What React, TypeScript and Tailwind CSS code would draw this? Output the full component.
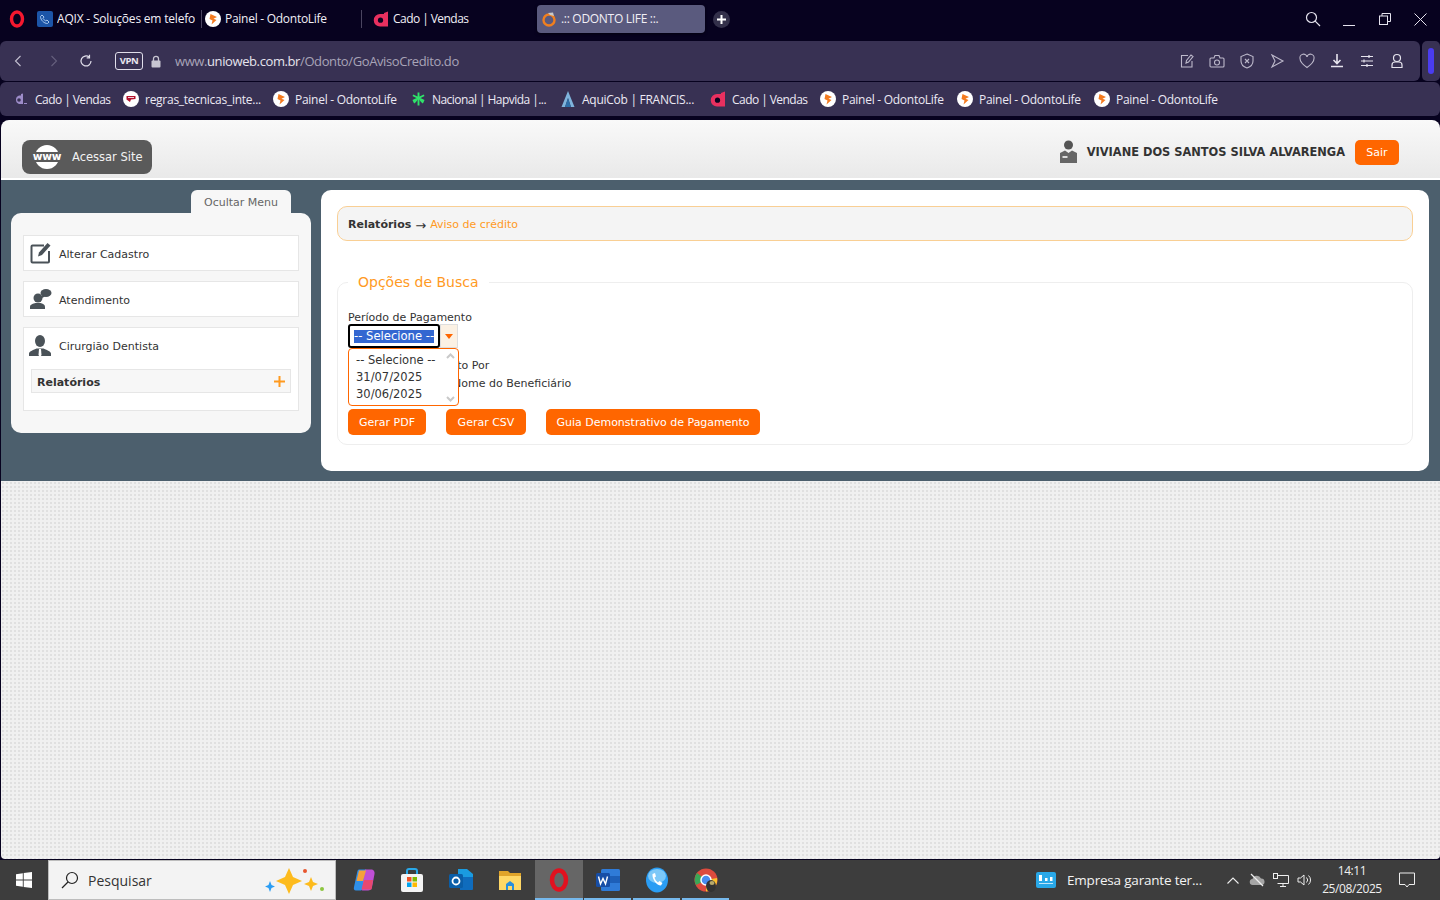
import React from 'react';

const PainelIcon = () => (
  <svg width="16" height="16" viewBox="0 0 16 16" className="shrink-0">
    <circle cx="8" cy="8" r="8" fill="#fff" />
    <path d="M5.5 3 L12 6 L8.5 7.8 L11.5 9 L6.5 13.5 L7.5 9.5 L4.5 8 Z" fill="#f47b20" />
  </svg>
);

const CadoIcon = () => (
  <svg width="16" height="16" viewBox="0 0 16 16" className="shrink-0">
    <path d="M11 2 L15 0.5 V15.5 H7 A6.2 6.2 0 0 1 7 3 H11 Z" fill="#e8305f" />
    <circle cx="7.5" cy="9.2" r="2.6" fill="#0a0420" />
  </svg>
);

const CadoPurple = () => (
  <svg width="16" height="16" viewBox="0 0 16 16" className="shrink-0">
    <path d="M8 3 L10 2.5 V13 H6 A4.5 4.5 0 0 1 6 4.5 H8 Z" fill="#9d8cc9" />
    <circle cx="6" cy="9" r="1.8" fill="#383153" />
    <rect x="11" y="12" width="3" height="1" fill="#9d8cc9" />
  </svg>
);

const RegrasIcon = () => (
  <svg width="16" height="16" viewBox="0 0 16 16" className="shrink-0">
    <circle cx="8" cy="8" r="8" fill="#fff" />
    <path d="M3.5 5 H12.5 V8 L8 8.5 L7 11 L3.5 8.5 Z" fill="#b3122e" />
    <path d="M5 6.2 H11 V7 H5 Z" fill="#fff" />
  </svg>
);

const NacionalIcon = () => (
  <svg width="15" height="16" viewBox="0 0 16 16" className="shrink-0" stroke="#2fe36a" strokeWidth="2">
    <path d="M8 1 V15 M2 4 L14 10 M14 4 L2 10 M3 12 L6 9 M13 12 L10 9" />
  </svg>
);

const AquiCobIcon = () => (
  <svg width="16" height="18" viewBox="0 0 16 18" className="shrink-0">
    <path d="M8 1 L14.5 17 H11 L8 8 L5 17 H1.5 Z" fill="#7fb4dc" />
    <path d="M8 8 L11 17 H5 Z" fill="#2d6ea8" />
  </svg>
);

const Bookmark = ({ icon, label, width, tight }: { icon: React.ReactNode; label: string; width: string; tight?: boolean }) => (
  <div className={`flex items-center gap-[6px] shrink-0 ${width}`}>
    {icon}
    <span className={`pt-[2px] text-[12px] text-[#ece9f3] whitespace-nowrap ${tight ? 'tracking-[-0.55px]' : 'tracking-[-0.27px]'}`}>{label}</span>
  </div>
);

const stroke = { fill: 'none', stroke: '#bdb9cb', strokeWidth: 1.1 };

const BrowserChrome = () => (
  <div className="bg-[#07021f] h-[120px] font-['Open_Sans',sans-serif]">
    {/* tab strip */}
    <div className="h-[41px] pb-[3px] flex items-center relative">
      <svg width="16" height="18" viewBox="0 0 16 18" className="ml-[9px] mr-[12px] shrink-0">
        <ellipse cx="8" cy="9" rx="5.5" ry="7" fill="none" stroke="#f5182f" strokeWidth="3.4" />
      </svg>
      <div className="w-[164px] flex items-center gap-[4px] shrink-0 overflow-hidden">
        <div className="w-[16px] h-[16px] bg-[#1c55a8] rounded-[2px] shrink-0 flex items-center justify-center">
          <svg width="12" height="12" viewBox="0 0 12 12" fill="none" stroke="#a9c8ee" strokeWidth="1">
            <path d="M3 2 L5 4 L4 5.5 L6.5 8 L8 7 L10 9 L8.5 10.5 C5 10.5 1.5 7 1.5 3.5 Z" />
          </svg>
        </div>
        <span className="text-[12px] tracking-[-0.2px] text-[#f1eff6] whitespace-nowrap w-[138px] overflow-hidden">AQIX - Soluções em telefo</span>
      </div>
      <div className="w-px h-[18px] bg-[#4a4560] shrink-0" />
      <div className="w-[159px] pl-[3px] flex items-center gap-[4px] shrink-0">
        <PainelIcon />
        <span className="text-[12px] tracking-[-0.27px] text-[#f1eff6] whitespace-nowrap">Painel - OdontoLife</span>
      </div>
      <div className="w-px h-[18px] bg-[#4a4560] shrink-0" />
      <div className="w-[175px] pl-[11px] flex items-center gap-[4px] shrink-0">
        <CadoIcon />
        <span className="text-[12px] tracking-[-0.55px] text-[#f1eff6] whitespace-nowrap">Cado | Vendas</span>
      </div>
      <div className="w-[168px] h-[28px] rounded-[4px] bg-[#5a5a7e] flex items-center pl-[4px] gap-[4px] shrink-0 shadow-[0_1px_3px_rgba(0,0,0,0.5)]">
        <svg width="16" height="16" viewBox="0 0 16 16">
          <circle cx="8" cy="9" r="5.5" fill="none" stroke="#f07f1f" strokeWidth="2.4" />
          <path d="M7 2 L12 1.5 L13 5 L9 4 Z" fill="#c9c9c9" />
        </svg>
        <span className="text-[12px] tracking-[-0.3px] text-[#f1eff6] whitespace-nowrap">.:: ODONTO LIFE ::.</span>
      </div>
      <div className="ml-[8px] w-[17px] h-[17px] rounded-full bg-[#33304a] flex items-center justify-center shrink-0">
        <svg width="9" height="9" viewBox="0 0 9 9" stroke="#fff" strokeWidth="2"><path d="M4.5 0 V9 M0 4.5 H9" /></svg>
      </div>
      <div className="flex-1" />
      {/* window controls */}
      <svg width="16" height="16" viewBox="0 0 16 16" fill="none" stroke="#e5e3ee" strokeWidth="1.2" className="mr-[22px]">
        <circle cx="6.5" cy="6.5" r="5" /><path d="M10.2 10.2 L15 15" />
      </svg>
      <div className="w-[12px] h-px bg-[#e5e3ee] mt-[12px] mr-[24px]" />
      <svg width="12" height="12" viewBox="0 0 12 12" fill="none" stroke="#e5e3ee" strokeWidth="1" className="mr-[23px]">
        <rect x="0.5" y="3" width="8" height="8.5" /><path d="M3 3 V0.5 H11.5 V8.5 H8.5" />
      </svg>
      <svg width="13" height="13" viewBox="0 0 13 13" fill="none" stroke="#e5e3ee" strokeWidth="1" className="mr-[13px]">
        <path d="M0.5 0.5 L12.5 12.5 M12.5 0.5 L0.5 12.5" />
      </svg>
    </div>
    {/* address bar */}
    <div className="h-[40px] flex gap-[2px]">
      <div className="flex-1 flex items-center bg-[#383153] rounded-[6px]">
        <svg width="8" height="12" viewBox="0 0 8 12" fill="none" stroke="#c3c0d0" strokeWidth="1.1" className="ml-[14px]"><path d="M6.5 1 L1.5 6 L6.5 11" /></svg>
        <svg width="8" height="12" viewBox="0 0 8 12" fill="none" stroke="#65607d" strokeWidth="1.1" className="ml-[28px]"><path d="M1.5 1 L6.5 6 L1.5 11" /></svg>
        <svg width="14" height="14" viewBox="0 0 14 14" fill="none" stroke="#e0deea" strokeWidth="1.2" className="ml-[21px]">
          <path d="M12 7 A5 5 0 1 1 10.3 3.2" /><path d="M10.5 0.8 V3.8 H7.7" />
        </svg>
        <div className="ml-[22px] w-[28px] h-[18px] border border-[#e0deea] rounded-[3px] flex items-center justify-center text-[9.5px] font-bold tracking-[-0.4px] text-[#e8e6f0]">VPN</div>
        <svg width="10" height="13" viewBox="0 0 10 13" className="ml-[8px]">
          <path d="M2.5 6 V3.8 A2.5 2.5 0 0 1 7.5 3.8 V6" fill="none" stroke="#c8c6d2" strokeWidth="1.3" />
          <rect x="0.5" y="5.5" width="9" height="7" rx="1" fill="#c8c6d2" />
        </svg>
        <div className="ml-[14px] pt-[2px] text-[13px] tracking-[-0.4px] text-[#a8a4b8] whitespace-nowrap">
          www.<span className="text-[#e6e4ee]">unioweb.com.br</span>/Odonto/GoAvisoCredito.do
        </div>
        <div className="flex-1" />
        <div className="flex items-center gap-[14px] mr-[15px]">
          <svg width="16" height="16" viewBox="0 0 16 16" {...stroke}><path d="M9 2.5 H2.5 V14 H13 V8" /><path d="M7 10 L7.5 7.5 L12 2 L14 3.5 L9.5 9 Z" /></svg>
          <svg width="16" height="16" viewBox="0 0 16 16" {...stroke}><path d="M2 5 H5 L6 2.5 H10 L11 5 H14 A1 1 0 0 1 15 6 V13 A1 1 0 0 1 14 14 H2 A1 1 0 0 1 1 13 V6 A1 1 0 0 1 2 5 Z" /><circle cx="8" cy="9.5" r="2.5" /></svg>
          <svg width="16" height="16" viewBox="0 0 16 16" {...stroke}><path d="M8 1 L14 3.5 V8 C14 11.5 11 14 8 15 C5 14 2 11.5 2 8 V3.5 Z" /><path d="M6 6 L10 10 M10 6 L6 10" /></svg>
          <svg width="16" height="16" viewBox="0 0 16 16" {...stroke}><path d="M3 2 L14 8 L3 14 L6 8 Z" /></svg>
          <svg width="16" height="16" viewBox="0 0 16 16" {...stroke}><path d="M8 14.5 C3 11 1 8.5 1 5.5 A3.5 3.5 0 0 1 8 4 A3.5 3.5 0 0 1 15 5.5 C15 8.5 13 11 8 14.5 Z" /></svg>
          <svg width="16" height="16" viewBox="0 0 16 16" fill="none" stroke="#e6e4ee" strokeWidth="1.3"><path d="M8 1 V10 M4.5 7 L8 10.5 L11.5 7 M2 13.5 H14" strokeWidth="1.6" /></svg>
          <svg width="16" height="16" viewBox="0 0 16 16" fill="none" stroke="#e6e4ee" strokeWidth="1.2"><path d="M2 3.5 H14 M2 8 H14 M2 12.5 H14 M10 2 V5 M5 6.5 V9.5 M8 11 V14" /></svg>
          <svg width="16" height="16" viewBox="0 0 16 16" fill="none" stroke="#e6e4ee" strokeWidth="1.2"><circle cx="8" cy="5" r="3.5" /><path d="M3 14.5 V12 A3 3 0 0 1 6 9 H10 A3 3 0 0 1 13 12 V14.5 Z" /></svg>
        </div>
      </div>
      <div className="w-[18px] bg-[#383153] rounded-[5px] flex items-center justify-center">
        <div className="w-[6px] h-[26px] bg-[#4a3cf0] rounded-[3px]" />
      </div>
    </div>
    {/* bookmarks */}
    <div className="h-[34px] mt-[1px] bg-[#383153] rounded-[6px] flex items-center pl-[13px]">
      <Bookmark icon={<CadoPurple />} label="Cado | Vendas" width="w-[110px]" tight />
      <Bookmark icon={<RegrasIcon />} label="regras_tecnicas_inte..." width="w-[150px]" />
      <Bookmark icon={<PainelIcon />} label="Painel - OdontoLife" width="w-[138px]" />
      <Bookmark icon={<NacionalIcon />} label="Nacional | Hapvida |..." width="w-[149px]" tight />
      <Bookmark icon={<AquiCobIcon />} label="AquiCob | FRANCIS..." width="w-[150px]" />
      <Bookmark icon={<CadoIcon />} label="Cado | Vendas" width="w-[110px]" tight />
      <Bookmark icon={<PainelIcon />} label="Painel - OdontoLife" width="w-[137px]" />
      <Bookmark icon={<PainelIcon />} label="Painel - OdontoLife" width="w-[137px]" />
      <Bookmark icon={<PainelIcon />} label="Painel - OdontoLife" width="w-[137px]" />
    </div>
  </div>
);

const MenuItem = ({ icon, label }: { icon: React.ReactNode; label: string }) => (
  <div className="h-[36px] bg-white border border-[#e6e6e6] flex items-center">
    <div className="w-[35px] flex justify-center">{icon}</div>
    <span className="pt-[4px] text-[11px] text-[#333]">{label}</span>
  </div>
);

const Sidebar = () => (
  <div className="w-[300px] shrink-0 ml-[10px] flex flex-col items-end">
    <div className="w-[100px] h-[23px] mr-[20px] pt-[4px] bg-[#f7f7f7] rounded-t-[6px] flex items-center justify-center text-[11px] text-[#666]">
      Ocultar Menu
    </div>
    <div className="w-full h-[220px] bg-[#f7f7f7] rounded-[10px] px-[12px] pt-[22px] flex flex-col gap-[10px]">
      <MenuItem
        label="Alterar Cadastro"
        icon={
          <svg width="22" height="22" viewBox="0 0 22 22" fill="none" className="-ml-[2px]">
            <path d="M14 3.5 H2.5 A1 1 0 0 0 1.5 4.5 V19.5 A1 1 0 0 0 2.5 20.5 H18 A1 1 0 0 0 19 19.5 V9" stroke="#4a5258" strokeWidth="2" />
            <path d="M8 14.5 L9 10.5 L17.5 1 L20.5 3.5 L12 13 Z" fill="#4a5258" />
          </svg>
        }
      />
      <MenuItem
        label="Atendimento"
        icon={
          <svg width="22" height="22" viewBox="0 0 22 22" fill="#4a5258" className="-ml-[2px]">
            <circle cx="8" cy="10" r="4.5" />
            <path d="M0 21 V18.5 C0 16.5 3.5 15.5 5.5 15 H10.5 C12.5 15.5 15 16.5 15 18.5 V21 Z" />
            <ellipse cx="16" cy="5" rx="5.5" ry="4" />
            <path d="M12 7 L11 10.5 L15 8.5 Z" />
          </svg>
        }
      />
      <div className="h-[84px] bg-white border border-[#e6e6e6] px-[7px]">
        <div className="h-[36px] flex items-center -mx-[7px]">
          <div className="w-[35px] flex justify-center">
            <svg width="24" height="24" viewBox="0 0 24 24" fill="#4a5258" className="-ml-[3px]">
              <ellipse cx="12" cy="7" rx="5" ry="6" />
              <path d="M1 22 V19.5 C1 17 6 16 8.5 14.5 H15.5 C18 16 23 17 23 19.5 V22 Z" />
              <path d="M11 15 H13 L13.5 21 L12 23.5 L10.5 21 Z" fill="#fff" />
            </svg>
          </div>
          <span className="pt-[2px] text-[11px] text-[#333]">Cirurgião Dentista</span>
        </div>
        <div className="mt-[5px] h-[24px] bg-[#f7f7f7] border border-[#e6e6e6] flex items-center justify-between pl-[5px] pr-[5px]">
          <span className="pt-[4px] text-[11px] font-bold text-[#333]">Relatórios</span>
          <svg width="11" height="11" viewBox="0 0 11 11" stroke="#ff9a1f" strokeWidth="2"><path d="M5.5 0 V11 M0 5.5 H11" /></svg>
        </div>
      </div>
    </div>
  </div>
);

const ResultPanel = () => (
  <div className="flex-1 h-[281px] ml-[10px] mr-[11px] bg-white rounded-[10px] p-[16px]">
    <div className="h-[35px] pt-[4px] bg-[#f4f4f4] border border-[#f9cf94] rounded-[10px] flex items-center pl-[10px] text-[11px]">
      <span className="font-bold text-[#333]">Relatórios</span>
      <span className="mx-[4px] text-[13px] leading-[13px] text-[#333]">→</span>
      <span className="text-[#ff9a1f]">Aviso de crédito</span>
    </div>
    <fieldset className="relative mt-[31px] h-[173px] border border-[#eeeeee] rounded-[10px] pl-[10px] pt-[19px]">
      <legend className="px-[10px] text-[14px] leading-[20px] text-[#ff9a1f]">Opções de Busca</legend>
      <div className="text-[11px] leading-[13px] text-[#333]">Período de Pagamento</div>
      <div className="flex">
        <div className="w-[92px] h-[24px] border-2 border-black rounded-[3px] bg-white flex items-center pl-[4px]">
          <span className="bg-[#3367d1] text-white text-[11.6px] leading-[13px] whitespace-nowrap">-- Selecione --</span>
        </div>
        <div className="w-[18px] h-[24px] bg-[#fbf1e4] border border-[#dedede] flex items-center justify-center">
          <svg width="8" height="5" viewBox="0 0 8 5" fill="#ff6600"><path d="M0 0 H8 L4 5 Z" /></svg>
        </div>
      </div>
      {/* rows covered by the open list */}
      <div className="mt-[9px] pl-[45px] text-[11px] leading-[18px] text-[#333] whitespace-nowrap">Agrupamento Por</div>
      <div className="pl-[105px] text-[11px] leading-[18px] text-[#333] whitespace-nowrap">Nome do Beneficiário</div>
      <div className="mt-[16px] flex gap-[20px]">
        <button className="w-[78px] h-[26px] pt-[2px] bg-[#ff6600] rounded-[5px] text-white text-[11px]">Gerar PDF</button>
        <button className="w-[80px] h-[26px] pt-[2px] bg-[#ff6600] rounded-[5px] text-white text-[11px]">Gerar CSV</button>
        <button className="w-[214px] h-[26px] pt-[2px] bg-[#ff6600] rounded-[5px] text-white text-[11px]">Guia Demonstrativo de Pagamento</button>
      </div>
      <div className="absolute left-[10px] top-[56px] w-[111px] h-[58px] bg-white border border-[#ff6600] rounded-[4px] pl-[6px] pt-[3px] text-[11.5px] leading-[17px] text-[#333]">
        <div className="pl-px">-- Selecione --</div>
        <div className="pl-px">31/07/2025</div>
        <div className="pl-px">30/06/2025</div>
        <svg width="9" height="6" viewBox="0 0 9 6" fill="none" stroke="#c9c9c9" strokeWidth="2" className="absolute right-[3px] top-[4px]"><path d="M1 5 L4.5 1.5 L8 5" /></svg>
        <svg width="9" height="6" viewBox="0 0 9 6" fill="none" stroke="#c9c9c9" strokeWidth="2" className="absolute right-[3px] bottom-[3px]"><path d="M1 1 L4.5 4.5 L8 1" /></svg>
      </div>
    </fieldset>
  </div>
);

const Taskbar = () => {
  const underline = 'absolute bottom-0 left-[1px] right-[1px] h-[2px] bg-[#76b9ed]';
  return (
    <div className="h-[40px] bg-[#3d3d3d] flex items-center font-['Open_Sans',sans-serif] text-white">
      <div className="w-[48px] flex justify-center">
        <svg width="16" height="16" viewBox="0 0 16 16" fill="#fff">
          <path d="M0 2.2 L6.8 1.2 V7.5 H0 Z M7.7 1.1 L16 0 V7.5 H7.7 Z M0 8.5 H6.8 V14.8 L0 13.8 Z M7.7 8.5 H16 V16 L7.7 14.9 Z" />
        </svg>
      </div>
      <div className="w-[288px] h-[40px] bg-[#f3f3f3] border border-[#bdbdbd] flex items-center pl-[12px] relative">
        <svg width="18" height="18" viewBox="0 0 18 18" fill="none" stroke="#222" strokeWidth="1.2">
          <circle cx="11" cy="7" r="5.5" /><path d="M7 11 L1 17" />
        </svg>
        <span className="ml-[9px] text-[14px] text-[#333]">Pesquisar</span>
        <svg width="64" height="28" viewBox="0 0 64 28" className="absolute left-[216px] top-[6px]">
          <path d="M24 1 L28 10 L37 14 L28 18 L24 27 L20 18 L11 14 L20 10 Z" fill="#fdbb1d" />
          <path d="M5 14 L6.5 18 L10 19.5 L6.5 21 L5 25 L3.5 21 L0 19.5 L3.5 18 Z" fill="#2a9df4" />
          <path d="M46 10 L48 15 L53 17 L48 19 L46 24 L44 19 L39 17 L44 15 Z" fill="#fdbb1d" />
          <circle cx="40" cy="4" r="2" fill="#e8562e" />
          <circle cx="57" cy="22" r="2" fill="#8cc63f" />
        </svg>
      </div>
      <div className="w-[199px] flex items-center justify-center pl-[2px] gap-[24px]">
        <svg width="24" height="24" viewBox="0 0 24 24">
          <path d="M7 1.5 H13 C15 1.5 15.5 3 15 5 L11 20 C10.5 22 9.5 22.5 8 22.5 H4 C2 22.5 1.5 21 2 19 L5 5 C5.5 2.5 6 1.5 7 1.5 Z" fill="#2f8fe8" />
          <path d="M13 1.5 H19 C21.5 1.5 23 3.5 22.5 6 L20 19 C19.5 21.5 18 22.5 16 22.5 H10 Z" fill="#c04fd6" />
          <path d="M7 2.5 H14 L11 13 H4.5 Z" fill="#f5a13c" />
          <path d="M12 12 H21 L19.5 21.5 H9.5 Z" fill="#e8486f" />
        </svg>
        <svg width="24" height="26" viewBox="0 0 24 26">
          <path d="M7 7 V4 A2 2 0 0 1 9 2 H15 A2 2 0 0 1 17 4 V7" fill="none" stroke="#29a8e8" strokeWidth="2" />
          <rect x="1" y="7" width="22" height="18" rx="2" fill="#f4f4f4" />
          <rect x="7" y="10" width="4.5" height="4.5" fill="#f25022" />
          <rect x="12.5" y="10" width="4.5" height="4.5" fill="#7fba00" />
          <rect x="7" y="15.5" width="4.5" height="4.5" fill="#00a4ef" />
          <rect x="12.5" y="15.5" width="4.5" height="4.5" fill="#ffb900" />
        </svg>
        <svg width="26" height="24" viewBox="0 0 26 24">
          <path d="M10 1 H19 L25 6 V20 L10 20 Z" fill="#1a9be0" />
          <path d="M12 9 H25 V21 A1 1 0 0 1 24 22 H12 Z" fill="#0f6cbd" />
          <rect x="1" y="6" width="14" height="14" rx="1.5" fill="#0a5ea8" />
          <circle cx="8" cy="13" r="3.5" fill="none" stroke="#fff" strokeWidth="1.8" />
        </svg>
        <svg width="24" height="22" viewBox="0 0 24 22">
          <path d="M1 2 H10 L12 4 H23 V9 H1 Z" fill="#e0a42a" />
          <rect x="1" y="7" width="22" height="14" fill="#ffd866" />
          <path d="M8 21 V15 L12 12 L16 15 V21 Z" fill="#2a8fdc" />
          <rect x="10" y="17" width="4" height="4" fill="#ffd866" />
        </svg>
      </div>
      <div className="w-[48px] h-[40px] bg-[#666666] relative flex items-center justify-center">
        <svg width="20" height="24" viewBox="0 0 20 24"><ellipse cx="10" cy="12" rx="7" ry="9.5" fill="none" stroke="#e1111f" strokeWidth="4.5" /></svg>
        <div className="absolute bottom-0 left-0 right-0 h-[2px] bg-[#76b9ed]" />
      </div>
      <div className="w-[49px] h-[40px] relative flex items-center justify-center">
        <svg width="26" height="24" viewBox="0 0 26 24">
          <rect x="6" y="1" width="19" height="22" rx="1.5" fill="#2f7bd8" />
          <rect x="6" y="8" width="19" height="7" fill="#1d5fb8" />
          <rect x="1" y="5" width="14" height="14" rx="1.5" fill="#174ea6" />
          <path d="M3.5 8.5 L5.5 16 L8 10.5 L10.5 16 L12.5 8.5" fill="none" stroke="#fff" strokeWidth="1.4" />
        </svg>
        <div className={underline} />
      </div>
      <div className="w-[49px] h-[40px] relative flex items-center justify-center">
        <svg width="24" height="26" viewBox="0 0 24 26">
          <ellipse cx="12" cy="13" rx="11" ry="12.5" fill="#2a9df4" />
          <ellipse cx="12" cy="9" rx="9" ry="7" fill="#7cc8f8" />
          <path d="M7.5 7 L10 6 L11 9.5 L9.5 10.5 C10 12.5 11.5 14.5 13 15.5 L14.5 14 L17.5 16 L16 18.5 C11.5 18.5 7 12 7.5 7 Z" fill="#fff" />
        </svg>
        <div className={underline} />
      </div>
      <div className="w-[49px] h-[40px] relative flex items-center justify-center">
        <svg width="24" height="24" viewBox="0 0 24 24">
          <circle cx="12" cy="12" r="11.5" fill="#dd4b3e" />
          <path d="M12 12 L2 17 A11.5 11.5 0 0 1 3 5 Z" fill="#3aa757" />
          <path d="M12 12 L23 10 A11.5 11.5 0 0 1 12 23.5 Z" fill="#fbc02d" />
          <circle cx="12" cy="12" r="5" fill="#4a8df0" stroke="#fff" strokeWidth="1.5" />
          <ellipse cx="17" cy="18" rx="5" ry="6" fill="#333" />
          <ellipse cx="18" cy="15" rx="2.5" ry="2" fill="#b9a96a" />
        </svg>
        <div className={underline} />
      </div>
      <div className="flex-1" />
      <svg width="20" height="18" viewBox="0 0 20 18" className="shrink-0">
        <rect x="0" y="1" width="20" height="16" rx="2" fill="#29a8e8" />
        <rect x="3" y="4" width="3" height="6" fill="#fff" />
        <rect x="9" y="7" width="2.5" height="3" fill="#fff" />
        <rect x="14" y="6" width="2.5" height="4" fill="#fff" />
        <rect x="3" y="12" width="14" height="1" fill="#bfe6fa" />
      </svg>
      <span className="ml-[11px] w-[135px] text-[13.5px] tracking-[-0.2px] text-[#f3f3f3] whitespace-nowrap">Empresa garante ter...</span>
      <svg width="12" height="7" viewBox="0 0 12 7" fill="none" stroke="#eee" strokeWidth="1.1" className="ml-[25px]"><path d="M0.5 6.5 L6 1 L11.5 6.5" /></svg>
      <svg width="16" height="14" viewBox="0 0 16 14" className="ml-[10px]">
        <path d="M4 12 A3 3 0 0 1 3.5 6 A4.5 4.5 0 0 1 12 5.5 A3.2 3.2 0 0 1 12.5 12 Z" fill="#a5a5a5" />
        <path d="M2 1 L14 13" stroke="#eee" strokeWidth="1.2" />
      </svg>
      <svg width="16" height="16" viewBox="0 0 16 16" fill="none" stroke="#eee" strokeWidth="1" className="ml-[8px]">
        <path d="M4.5 3.5 H15.5 V11.5 H4.5 M10 11.5 V14.5 M7 14.5 H13" /><rect x="0.5" y="1.5" width="4" height="5" fill="#3d3d3d" />
      </svg>
      <svg width="16" height="16" viewBox="0 0 16 16" fill="none" stroke="#eee" strokeWidth="1" className="ml-[8px]">
        <path d="M1 6 H3.5 L7 3 V13 L3.5 10 H1 Z M9.5 5.5 A3.5 3.5 0 0 1 9.5 10.5 M11.5 3.5 A6 6 0 0 1 11.5 12.5" />
      </svg>
      <div className="w-[78px] text-center text-[12px] leading-[18px] tracking-[-0.4px] text-[#f0f0f0]">
        <div>14:11</div>
        <div>25/08/2025</div>
      </div>
      <svg width="16" height="16" viewBox="0 0 16 16" fill="none" stroke="#eee" strokeWidth="1" className="ml-[8px] mr-[25px]">
        <path d="M0.5 1 H15.5 V12.5 H10 L8 15 L6 12.5 H0.5 Z" />
      </svg>
    </div>
  );
};

export default function App() {
  return (
    <div className="w-[1440px] h-[900px] overflow-hidden bg-[#07021f] font-['DejaVu_Sans',sans-serif]">
      <BrowserChrome />
      <div className="h-[740px] ml-px rounded-t-[8px] overflow-hidden flex flex-col">
        <header className="h-[60px] shrink-0 bg-gradient-to-b from-[#f9f9f9] to-[#e9e9e9] border-b-2 border-white flex items-center pl-[21px]">
          <div className="w-[130px] h-[34px] mt-[15px] bg-[#5a5a5a] rounded-[8px] flex items-center pl-[11px] gap-[11px]">
            <div className="relative w-[28px] h-[24px] flex items-center justify-center">
              <div className="absolute w-[24px] h-[24px] rounded-full bg-white" />
              <div className="absolute w-[28px] h-[10px] bg-[#5a5a5a]" />
              <span className="relative text-[10.5px] font-bold text-white leading-none tracking-[-0.2px]">www</span>
            </div>
            <span className="pt-[2px] text-[11.5px] text-[#f2f2f2]">Acessar Site</span>
          </div>
          <div className="flex-1" />
          <svg width="17" height="23" viewBox="0 0 17 23" fill="#666" className="mt-[4px]">
            <circle cx="8.5" cy="5" r="4.5" fill="#555" />
            <path d="M0 23 V13 L5 10.5 L8.5 13 L12 10.5 L17 13 V23 Z" />
            <rect x="2.5" y="16" width="5" height="2" fill="#ddd" />
          </svg>
          <span className="ml-[10px] mt-[7px] text-[11.4px] font-bold text-[#333] whitespace-nowrap">VIVIANE DOS SANTOS SILVA ALVARENGA</span>
          <div className="ml-[10px] mr-[41px] w-[44px] h-[25px] mt-[6px] pt-[2px] bg-[#ff6600] rounded-[5px] flex items-center justify-center text-[11px] text-white">Sair</div>
        </header>
        <main className="h-[301px] shrink-0 bg-[#4c5f6d] flex pt-[10px]">
          <Sidebar />
          <ResultPanel />
        </main>
        <div className="h-[378px] shrink-0 rounded-b-[4px] bg-[#f0f0f0] bg-[radial-gradient(#e0e0e0_1px,transparent_1px)] bg-[length:4px_4px]" />
      </div>
      <Taskbar />
    </div>
  );
}
